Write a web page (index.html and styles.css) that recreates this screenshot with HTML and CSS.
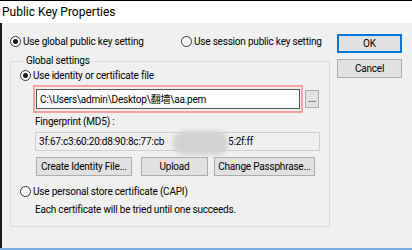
FILE: index.html
```html
<!DOCTYPE html>
<html lang="en">
<head>
    <meta charset="UTF-8">
    <title>Public Key Properties</title>
    <link rel="stylesheet" href="styles.css">
</head>
<body>

<div class="window">
    <div class="titlebar">Public Key Properties</div>

    <div class="client">
        <div class="main">
            <!-- Global / session -->
            <div class="scope">
                <label class="radio-row global"><span class="radio checked"></span>Use global public key setting</label>
                <label class="radio-row"><span class="radio"></span>Use session public key setting</label>
            </div>

            <fieldset class="group">
                <legend>Global settings</legend>

                <label class="radio-row"><span class="radio checked"></span>Use identity or certificate file</label>

                <div class="indent">
                    <div class="path-row">
                        <div class="path-mark">
                            <div class="path-input">C:\Users\admin\Desktop\<span class="cjk">翻墙</span>\aa.pem</div>
                        </div>
                        <button class="btn browse">...</button>
                    </div>

                    <div class="caption">Fingerprint (MD5) :</div>
                    <div class="readonly">
                        <span class="head">3f:67:c3:60:20:d8:90:8c:77:cb</span><span class="tail">5:2f:ff</span>
                        <span class="smudge"></span>
                    </div>

                    <div class="actions">
                        <button class="btn create">Create Identity File...</button>
                        <button class="btn upload">Upload</button>
                        <button class="btn passphrase">Change Passphrase...</button>
                    </div>
                </div>

                <label class="radio-row capi"><span class="radio"></span>Use personal store certificate (CAPI)</label>
                <div class="indent note">Each certificate will be tried until one succeeds.</div>
            </fieldset>
        </div>

        <div class="side">
            <button class="btn default">OK</button>
            <button class="btn">Cancel</button>
        </div>
    </div>

    <div class="statusbar"></div>
</div>

</body>
</html>
```

FILE: styles.css
```css
body {
    margin: 0;
    font-family: Roboto, "Noto Sans CJK SC", sans-serif;
    font-size: 10px;
    letter-spacing: -0.2px;
    color: #000;
    background: #f0f0f0;
}
.window {
    width: 412px;
    height: 250px;
    display: flex;
    flex-direction: column;
    overflow: hidden;
}
.titlebar {
    height: 22px;
    line-height: 22px;
    border-top: 1px solid #000;
    background: #fff;
    padding-left: 2px;
    font-size: 12px;
    letter-spacing: 0;
}
.client {
    flex: 1;
    display: flex;
    gap: 7px;
    background: #f0f0f0;
    border-left: 2px solid #1a1a1a;
    padding: 11px 0 0 8px;
}
.main {
    width: 320px;
}
.side {
    display: flex;
    flex-direction: column;
    gap: 6px;
}
.statusbar {
    height: 2px;
    background: #78aee0;
}

/* radios */
.radio-row {
    display: flex;
    align-items: center;
    height: 14px;
    white-space: nowrap;
}
.radio {
    width: 11px;
    height: 11px;
    box-sizing: border-box;
    border: 1px solid #333;
    border-radius: 50%;
    background: #fff;
    margin-right: 2px;
    display: flex;
    align-items: center;
    justify-content: center;
}
.radio.checked::after {
    content: "";
    width: 5px;
    height: 5px;
    border-radius: 50%;
    background: #1a1a1a;
}
.scope {
    display: flex;
    height: 14px;
}
.scope .global {
    width: 171px;
}

/* group box */
.group {
    margin: 6px 0 0;
    padding: 0 0 9px 9px;
    border: 1px solid #dcdcdc;
    min-width: 0;
}
.group legend {
    padding: 0 2px;
    margin-left: 4px;
    line-height: 14px;
}
.indent {
    margin-left: 13px;
}
.path-row {
    display: flex;
    align-items: center;
    gap: 2px;
    margin-top: 3px;
}
.path-mark {
    width: 270px;
    box-sizing: border-box;
    border: 2px solid #f4a3a3;
    padding: 2px 1px;
}
.path-input {
    height: 20px;
    line-height: 18px;
    box-sizing: border-box;
    border: 1px solid #555;
    background: #fff;
    padding-left: 3px;
    white-space: nowrap;
}
.cjk {
    font-family: "Noto Sans CJK SC", sans-serif;
}
.caption {
    line-height: 14px;
    margin: 2px 0 0 2px;
}
.readonly {
    position: relative;
    width: 285px;
    height: 19px;
    line-height: 17px;
    box-sizing: border-box;
    margin: 3px 0 0 2px;
    border: 1px solid #cfcfcf;
    padding-left: 3px;
    white-space: nowrap;
    display: flex;
}
.readonly .head {
    width: 189px;
}
.smudge {
    position: absolute;
    left: 137px;
    top: -2px;
    width: 55px;
    height: 24px;
    border-radius: 11px;
    background: #d2d2d2;
    filter: blur(2px);
}
.actions {
    display: flex;
    margin: 6px 0 0 3px;
}
.btn {
    height: 19px;
    padding: 0;
    font: inherit;
    letter-spacing: inherit;
    white-space: nowrap;
    color: #000;
    background: #e1e1e1;
    border: 1px solid #adadad;
    box-sizing: border-box;
}
.btn.browse {
    width: 14px;
    height: 18px;
    line-height: 10px;
}
.create {
    width: 96px;
}
.upload {
    width: 67px;
    margin-left: 9px;
}
.passphrase {
    width: 101px;
    margin-left: 6px;
}
.capi {
    margin-top: 8px;
}
.note {
    line-height: 14px;
    margin: 5px 0 0 15px;
}
.side .btn {
    width: 65px;
}
.btn.default {
    border: 2px solid #0078d7;
}
```
